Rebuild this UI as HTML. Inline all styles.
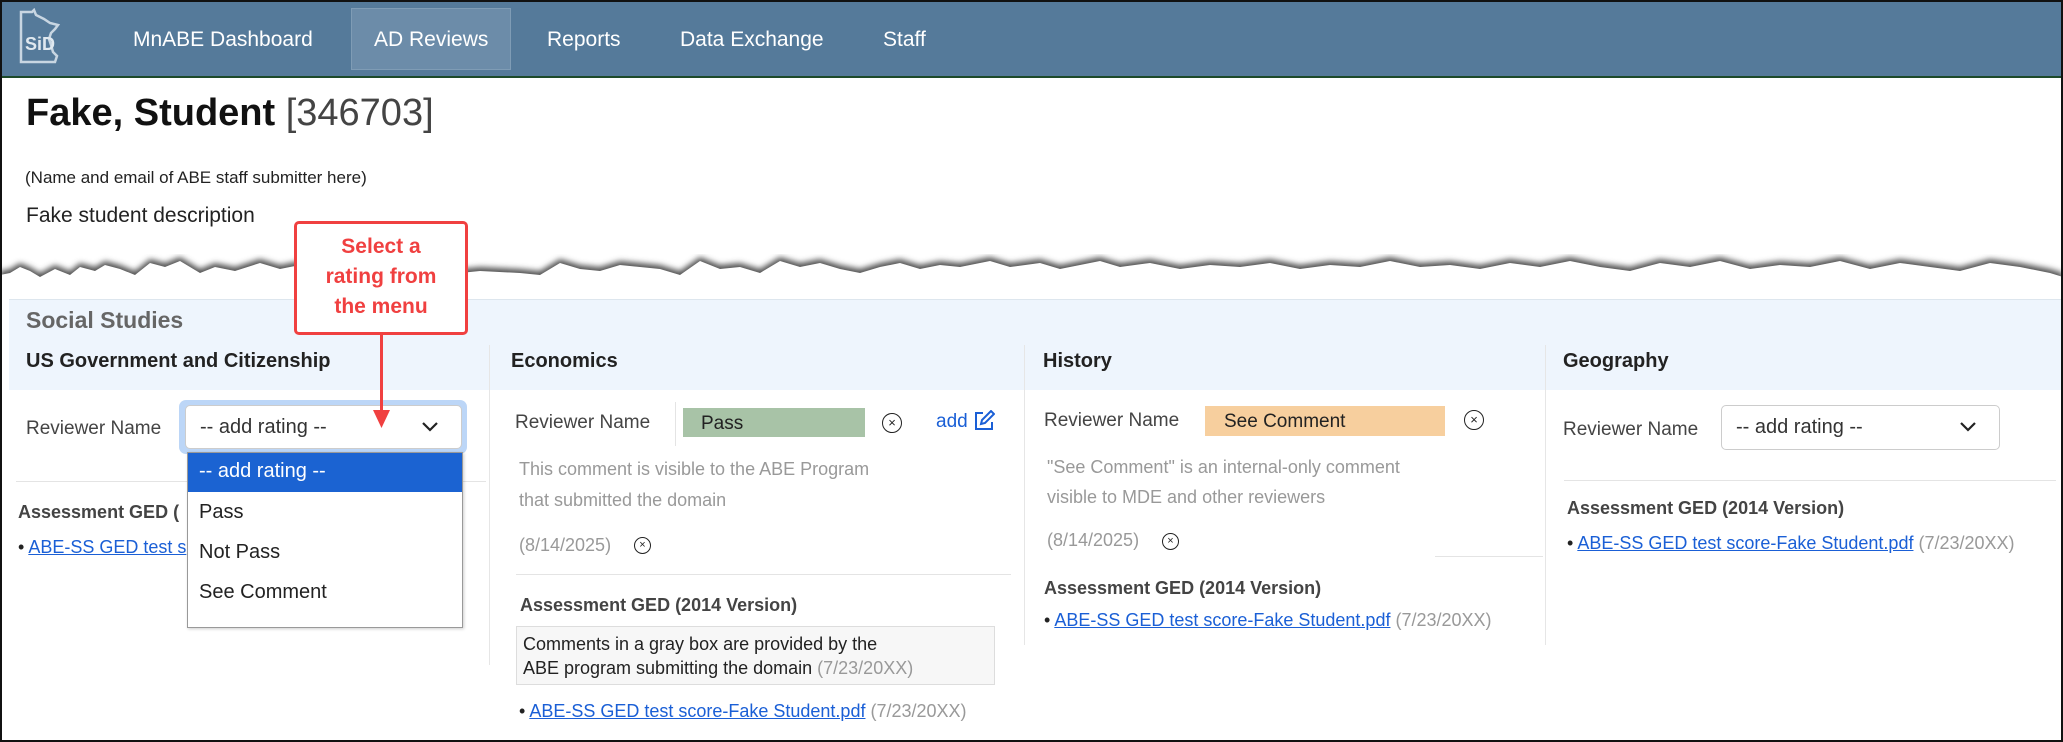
<!DOCTYPE html>
<html><head><meta charset="utf-8"><style>
*{margin:0;padding:0;box-sizing:border-box}
body{width:2063px;height:742px;overflow:hidden;background:#fff;font-family:"Liberation Sans",Arial,sans-serif;position:relative;color:#222}
.a{position:absolute;white-space:nowrap}
.nav{left:0;top:0;width:2063px;height:78px;background:#557a9a;border-bottom:2px solid #1d4a2a}
.ni{color:#fff;font-size:21px;top:28px}
.lbl{font-size:19px;color:#444}
.gr{color:#999;font-size:18px}
.lnk{color:#1a5fd6;text-decoration:underline;font-size:18px}
.h3{font-weight:bold;font-size:20px;color:#222}
.h4{font-weight:bold;font-size:18px;color:#444}
.x{width:20px;height:20px;border:1.5px solid #222;border-radius:50%;font-size:13px;text-align:center;line-height:17px;color:#222}
.sel{border:1px solid #ccc;border-radius:5px;background:#fff;font-size:20px;color:#333;padding-left:14px;line-height:42px}
.hr{height:1px;background:#e4e4e4}
.vs{width:1px;background:#e6e6e6}
.chev{position:absolute;right:22px;top:15px}
</style></head><body>
<div class="a nav"></div>
<div class="a" style="left:351px;top:8px;width:160px;height:62px;background:#6c8ca9;border:1px solid #7f9cb5"></div>
<svg class="a" style="left:18px;top:8px" width="50" height="56" viewBox="0 0 50 56"><path d="M3 4 L14 4 L16 2 L18 7 L26 11 L32 15 L40 17 L37 21 L33 25 L31 31 L33 37 L35 44 L39 48 L37 54 L3 54 Z" fill="none" stroke="#c8d6e2" stroke-width="2.5"/><text x="7" y="42" font-family="Liberation Sans" font-weight="bold" font-size="18" fill="#dfe8ef">SiD</text></svg>
<div class="a ni" style="left:133px">MnABE Dashboard</div>
<div class="a ni" style="left:374px">AD Reviews</div>
<div class="a ni" style="left:547px">Reports</div>
<div class="a ni" style="left:680px">Data Exchange</div>
<div class="a ni" style="left:883px">Staff</div>

<div class="a" style="left:26px;top:92px;font-size:38px;font-weight:bold;color:#111">Fake, Student <span style="font-weight:normal;color:#444">[346703]</span></div>
<div class="a" style="left:25px;top:168px;font-size:17px;color:#222">(Name and email of ABE staff submitter here)</div>
<div class="a" style="left:26px;top:204px;font-size:21px;color:#222">Fake student description</div>

<svg class="a" style="left:0;top:245px" width="2063" height="50"><defs><filter id="b"><feGaussianBlur stdDeviation="3"/></filter></defs>
<path d="M0 26 L10 24 L20 18 L30 22 L40 28 L55 20 L70 26 L80 18 L95 22 L105 16 L120 20 L135 26 L150 14 L165 18 L180 12 L200 24 L215 18 L235 22 L260 14 L280 20 L300 16 L320 22 L345 16 L370 20 L400 14 L430 18 L460 24 L480 22 L520 24 L540 26 L560 14 L580 20 L600 22 L620 16 L640 18 L660 20 L680 26 L700 12 L720 20 L740 18 L760 24 L780 12 L800 18 L820 14 L840 20 L860 24 L880 18 L900 14 L920 20 L940 16 L960 18 L990 12 L1010 18 L1040 14 L1060 20 L1080 16 L1100 12 L1120 18 L1150 14 L1180 20 L1210 16 L1240 18 L1270 14 L1300 20 L1330 16 L1360 18 L1390 12 L1420 18 L1450 16 L1480 20 L1510 14 L1540 18 L1570 12 L1600 18 L1630 22 L1660 14 L1690 18 L1720 12 L1750 20 L1780 16 L1810 18 L1840 12 L1870 20 L1900 14 L1930 18 L1960 22 L1990 14 L2020 18 L2050 24 L2063 28 L2063 42 L0 42 Z" fill="#555" filter="url(#b)"/>
<path d="M0 30 L10 28 L20 22 L30 26 L40 32 L55 24 L70 30 L80 22 L95 26 L105 20 L120 24 L135 30 L150 18 L165 22 L180 16 L200 28 L215 22 L235 26 L260 18 L280 24 L300 20 L320 26 L345 20 L370 24 L400 18 L430 22 L460 28 L480 26 L520 28 L540 30 L560 18 L580 24 L600 26 L620 20 L640 22 L660 24 L680 30 L700 16 L720 24 L740 22 L760 28 L780 16 L800 22 L820 18 L840 24 L860 28 L880 22 L900 18 L920 24 L940 20 L960 22 L990 16 L1010 22 L1040 18 L1060 24 L1080 20 L1100 16 L1120 22 L1150 18 L1180 24 L1210 20 L1240 22 L1270 18 L1300 24 L1330 20 L1360 22 L1390 16 L1420 22 L1450 20 L1480 24 L1510 18 L1540 22 L1570 16 L1600 22 L1630 26 L1660 18 L1690 22 L1720 16 L1750 24 L1780 20 L1810 22 L1840 16 L1870 24 L1900 18 L1930 22 L1960 26 L1990 18 L2020 22 L2050 28 L2063 32 L2063 50 L0 50 Z" fill="#fff"/></svg>

<div class="a" style="left:9px;top:299px;width:2054px;height:91px;background:#eef5fd;border-top:1px solid #dde6ee"></div>
<div class="a" style="left:26px;top:307px;font-size:23px;font-weight:bold;color:#666">Social Studies</div>
<div class="a vs" style="left:489px;top:345px;height:320px"></div>
<div class="a vs" style="left:1024px;top:345px;height:300px"></div>
<div class="a vs" style="left:1545px;top:345px;height:300px"></div>
<div class="a h3" style="left:26px;top:350px">US Government and Citizenship</div>
<div class="a h3" style="left:511px;top:350px">Economics</div>
<div class="a h3" style="left:1043px;top:350px">History</div>
<div class="a h3" style="left:1563px;top:350px">Geography</div>

<!-- col1 -->
<div class="a lbl" style="left:26px;top:418px">Reviewer Name</div>
<div class="a" style="left:179px;top:400px;width:288px;height:54px;border-radius:7px;background:#bcd6f7"></div>
<div class="a sel" style="left:185px;top:405px;width:277px;height:44px">-- add rating --<svg class="chev" width="18" height="12" viewBox="0 0 18 12"><path d="M2 2 L9 9 L16 2" fill="none" stroke="#222" stroke-width="2.2"/></svg></div>
<div class="a hr" style="left:16px;top:481px;width:470px"></div>
<div class="a h4" style="left:18px;top:502px">Assessment GED (</div>
<div class="a" style="left:18px;top:537px;font-size:18px">• <span class="lnk">ABE-SS GED test s</span></div>
<div class="a" style="left:187px;top:452px;width:276px;height:176px;background:#fff;border:1.5px solid #999;box-shadow:1px 1px 3px rgba(0,0,0,.2)"></div>
<div class="a" style="left:188px;top:453px;width:274px;height:39px;background:#1b63d2"></div>
<div class="a" style="left:199px;top:460px;font-size:20px;color:#fff">-- add rating --</div>
<div class="a" style="left:199px;top:501px;font-size:20px">Pass</div>
<div class="a" style="left:199px;top:541px;font-size:20px">Not Pass</div>
<div class="a" style="left:199px;top:581px;font-size:20px">See Comment</div>

<!-- col2 -->
<div class="a lbl" style="left:515px;top:412px">Reviewer Name</div>
<div class="a" style="left:675px;top:402px;width:1px;height:44px;background:#e4e4e4"></div>
<div class="a" style="left:683px;top:408px;width:182px;height:29px;background:#a8c3a7;font-size:19px;padding:5px 18px;color:#222">Pass</div>
<div class="a x" style="left:882px;top:413px">×</div>
<div class="a" style="left:936px;top:411px;font-size:19px;color:#1a5fd6">add</div>
<svg class="a" style="left:973px;top:410px" width="22" height="22" viewBox="0 0 22 22"><path d="M10 3H3v16h16v-7" fill="none" stroke="#1a5fd6" stroke-width="2"/><path d="M8 14l1-4 9-9 3 3-9 9z" fill="none" stroke="#1a5fd6" stroke-width="2"/></svg>
<div class="a gr" style="left:519px;top:459px">This comment is visible to the ABE Program</div>
<div class="a gr" style="left:519px;top:490px">that submitted the domain</div>
<div class="a gr" style="left:519px;top:535px">(8/14/2025)</div>
<div class="a x" style="left:634px;top:537px;width:17px;height:17px;line-height:14px;font-size:11px">×</div>
<div class="a hr" style="left:516px;top:574px;width:495px"></div>
<div class="a h4" style="left:520px;top:595px">Assessment GED (2014 Version)</div>
<div class="a" style="left:516px;top:626px;width:479px;height:59px;background:#f7f7f7;border:1px solid #ddd"></div>
<div class="a" style="left:523px;top:632px;font-size:18px;color:#222;line-height:24px">Comments in a gray box are provided by the<br>ABE program submitting the domain <span style="color:#999">(7/23/20XX)</span></div>
<div class="a" style="left:519px;top:701px;font-size:18px">• <span class="lnk">ABE-SS GED test score-Fake Student.pdf</span> <span style="color:#999">(7/23/20XX)</span></div>

<!-- col3 -->
<div class="a lbl" style="left:1044px;top:410px">Reviewer Name</div>
<div class="a" style="left:1205px;top:406px;width:240px;height:30px;background:#f7cf9e;font-size:19px;padding:5px 19px;color:#222">See Comment</div>
<div class="a x" style="left:1464px;top:410px">×</div>
<div class="a gr" style="left:1047px;top:457px">"See Comment" is an internal-only comment</div>
<div class="a gr" style="left:1047px;top:487px">visible to MDE and other reviewers</div>
<div class="a gr" style="left:1047px;top:530px">(8/14/2025)</div>
<div class="a x" style="left:1162px;top:533px;width:17px;height:17px;line-height:14px;font-size:11px">×</div>
<div class="a hr" style="left:1435px;top:556px;width:108px"></div>
<div class="a h4" style="left:1044px;top:578px">Assessment GED (2014 Version)</div>
<div class="a" style="left:1044px;top:610px;font-size:18px">• <span class="lnk">ABE-SS GED test score-Fake Student.pdf</span> <span style="color:#999">(7/23/20XX)</span></div>

<!-- col4 -->
<div class="a lbl" style="left:1563px;top:419px">Reviewer Name</div>
<div class="a sel" style="left:1721px;top:405px;width:279px;height:45px">-- add rating --<svg class="chev" width="18" height="12" viewBox="0 0 18 12"><path d="M2 2 L9 9 L16 2" fill="none" stroke="#222" stroke-width="2.2"/></svg></div>
<div class="a hr" style="left:1564px;top:480px;width:492px"></div>
<div class="a h4" style="left:1567px;top:498px">Assessment GED (2014 Version)</div>
<div class="a" style="left:1567px;top:533px;font-size:18px">• <span class="lnk">ABE-SS GED test score-Fake Student.pdf</span> <span style="color:#999">(7/23/20XX)</span></div>

<!-- callout -->
<div class="a" style="left:294px;top:221px;width:174px;height:114px;background:#fff;border:3px solid #f04040;border-radius:5px;color:#f04040;font-weight:bold;font-size:21px;text-align:center;line-height:30px;padding-top:8px;white-space:normal">Select a<br>rating from<br>the menu</div>
<div class="a" style="left:380px;top:335px;width:3px;height:78px;background:#f04040"></div>
<svg class="a" style="left:373px;top:410px" width="17" height="18"><path d="M0 0 L17 0 L8.5 18Z" fill="#f04040"/></svg>

<div class="a" style="left:0;top:0;width:2063px;height:742px;border:2px solid #111;pointer-events:none"></div>
</body></html>
